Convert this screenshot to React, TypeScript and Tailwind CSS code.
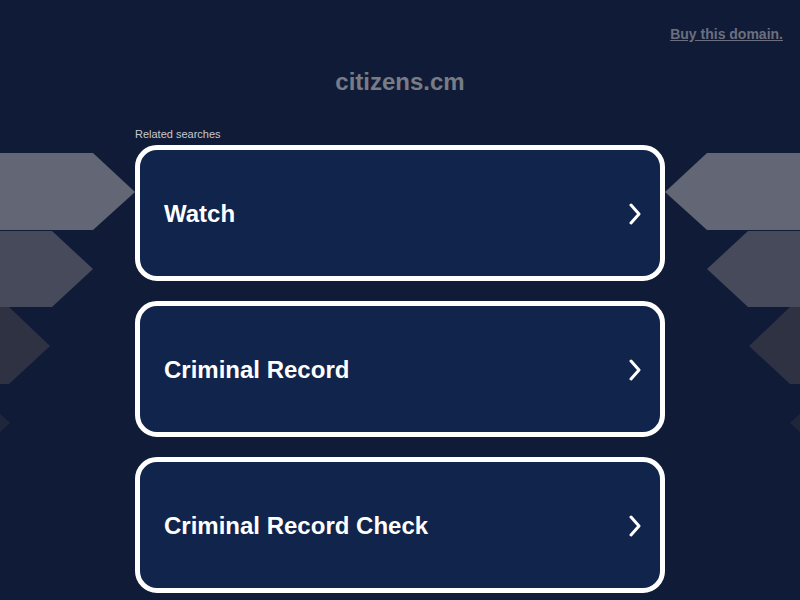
const searches = ["Watch", "Criminal Record", "Criminal Record Check"]

const Chevron = () => (
    <svg width="14" height="22" viewBox="0 0 14 22" fill="none">
        <polyline points="3,2 11,11 3,20" stroke="white" strokeWidth="3" strokeLinecap="round" strokeLinejoin="round" />
    </svg>
)

const LeftArrows = () => (
    <svg className="absolute left-0 top-[153px]" width="135" height="310" viewBox="0 0 135 310">
        <polygon points="0,0 93,0 135,39 93,77 0,77" fill="#626675" />
        <polygon points="0,78 52,78 93,116 52,154 0,154" fill="#474a5a" />
        <polygon points="0,154 9,154 50,193 9,231 0,231" fill="#2e3243" />
        <polygon points="-32,231 10,270 -32,309" fill="#1f2639" />
    </svg>
)

const RightArrows = () => (
    <svg className="absolute left-[665px] top-[153px]" width="135" height="310" viewBox="0 0 135 310">
        <polygon points="0,39 42,0 135,0 135,77 42,77" fill="#626675" />
        <polygon points="42,116 83,78 135,78 135,154 83,154" fill="#474a5a" />
        <polygon points="84,193 125,154 135,154 135,231 125,231" fill="#2e3243" />
        <polygon points="125,270 167,231 167,309" fill="#1f2639" />
    </svg>
)

export default function App() {
    return (
        <div className="relative h-[600px] w-full overflow-hidden bg-[#101c37] font-['Liberation_Sans',Arial,sans-serif]">
            <LeftArrows />
            <RightArrows />
            <div className="relative">
                <div className="flex justify-end pt-[26px] pr-[17px]">
                    <a href="#" className="text-[14px] leading-[16px] font-bold text-[#6b6f80] underline">Buy this domain.</a>
                </div>
                <h1 className="mt-[26px] text-center text-[24px] leading-[28px] font-bold text-[#787c86]">citizens.cm</h1>
                <div className="mx-auto mt-[32px] w-[530px]">
                    <p className="text-[11px] leading-[13px] text-[#c5c8d0]">Related searches</p>
                    <div className="mt-[4px] flex flex-col gap-[20px]">
                        {searches.map((s) => (
                            <div key={s} className="flex h-[136px] items-center justify-between rounded-[22px] border-[5px] border-white bg-[#11244c] pt-[2px] pl-[24px] pr-[18px]">
                                <span className="text-[24px] font-bold text-white">{s}</span>
                                <Chevron />
                            </div>
                        ))}
                    </div>
                </div>
            </div>
        </div>
    )
}
